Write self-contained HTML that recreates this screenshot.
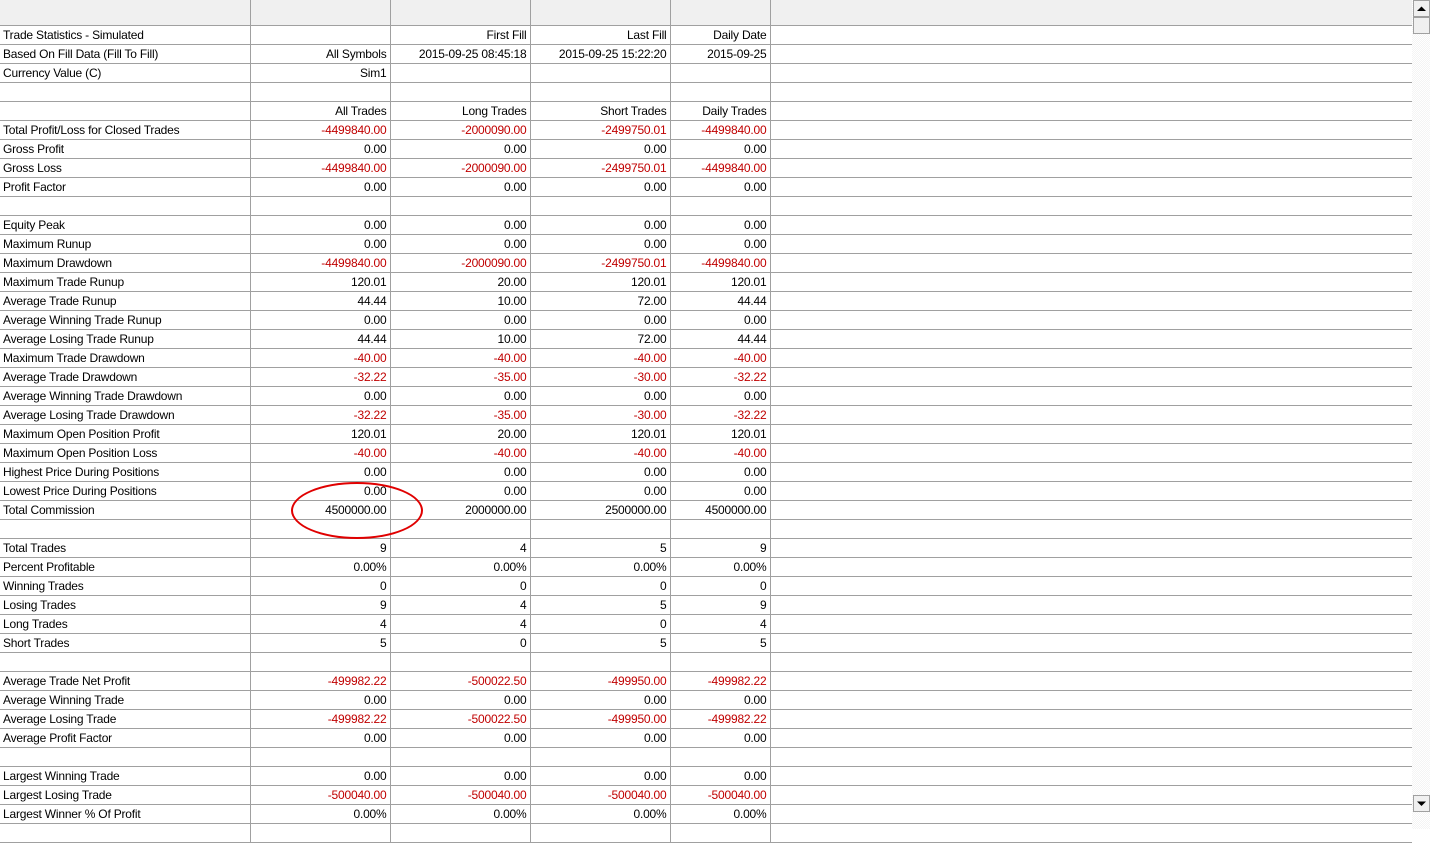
<!DOCTYPE html>
<html><head><meta charset="utf-8"><style>
html,body{margin:0;padding:0;background:#fff;width:1430px;height:829px;overflow:hidden;font-family:"Liberation Sans",Tahoma,sans-serif;font-size:12px;color:#000}
#g{position:absolute;left:0;top:0;width:1412px}
table{border-collapse:collapse;table-layout:fixed;width:1412px}
td{height:18px;padding:0 3px;border-right:1px solid #a0a0a0;border-bottom:1px solid #a0a0a0;white-space:nowrap;overflow:hidden;text-align:right;line-height:18px;letter-spacing:-0.2px}
td:first-child{text-align:left}
tr.h td{height:25px;background:#f0f0f0;border-bottom:1px solid #a0a0a0}
td:last-child{border-right:none}
.r{color:#c00000}
#sb{position:absolute;left:1412px;top:0;width:18px;height:829px;background:repeating-conic-gradient(#f4f4f4 0 25%,#fff 0 50%) 0 0/2px 2px}
.btn{position:absolute;left:1px;width:17px;height:17px;background:#f0f0f0;border:1px solid #a0a0a0;box-sizing:border-box}
#el{position:absolute;left:291px;top:482px;width:132px;height:57px;border:2px solid #e00000;border-radius:50%;box-sizing:border-box}
</style></head><body>
<div id="g"><table>
<colgroup><col style="width:250px"><col style="width:140px"><col style="width:140px"><col style="width:140px"><col style="width:100px"><col></colgroup>
<tr class="h"><td></td><td></td><td></td><td></td><td></td><td></td></tr>
<tr><td>Trade Statistics - Simulated</td><td></td><td>First Fill</td><td>Last Fill</td><td>Daily Date</td><td></td></tr>
<tr><td>Based On Fill Data (Fill To Fill)</td><td>All Symbols</td><td>2015-09-25 08:45:18</td><td>2015-09-25 15:22:20</td><td>2015-09-25</td><td></td></tr>
<tr><td>Currency Value (C)</td><td>Sim1</td><td></td><td></td><td></td><td></td></tr>
<tr><td></td><td></td><td></td><td></td><td></td><td></td></tr>
<tr><td></td><td>All Trades</td><td>Long Trades</td><td>Short Trades</td><td>Daily Trades</td><td></td></tr>
<tr><td>Total Profit/Loss for Closed Trades</td><td class="r">-4499840.00</td><td class="r">-2000090.00</td><td class="r">-2499750.01</td><td class="r">-4499840.00</td><td></td></tr>
<tr><td>Gross Profit</td><td>0.00</td><td>0.00</td><td>0.00</td><td>0.00</td><td></td></tr>
<tr><td>Gross Loss</td><td class="r">-4499840.00</td><td class="r">-2000090.00</td><td class="r">-2499750.01</td><td class="r">-4499840.00</td><td></td></tr>
<tr><td>Profit Factor</td><td>0.00</td><td>0.00</td><td>0.00</td><td>0.00</td><td></td></tr>
<tr><td></td><td></td><td></td><td></td><td></td><td></td></tr>
<tr><td>Equity Peak</td><td>0.00</td><td>0.00</td><td>0.00</td><td>0.00</td><td></td></tr>
<tr><td>Maximum Runup</td><td>0.00</td><td>0.00</td><td>0.00</td><td>0.00</td><td></td></tr>
<tr><td>Maximum Drawdown</td><td class="r">-4499840.00</td><td class="r">-2000090.00</td><td class="r">-2499750.01</td><td class="r">-4499840.00</td><td></td></tr>
<tr><td>Maximum Trade Runup</td><td>120.01</td><td>20.00</td><td>120.01</td><td>120.01</td><td></td></tr>
<tr><td>Average Trade Runup</td><td>44.44</td><td>10.00</td><td>72.00</td><td>44.44</td><td></td></tr>
<tr><td>Average Winning Trade Runup</td><td>0.00</td><td>0.00</td><td>0.00</td><td>0.00</td><td></td></tr>
<tr><td>Average Losing Trade Runup</td><td>44.44</td><td>10.00</td><td>72.00</td><td>44.44</td><td></td></tr>
<tr><td>Maximum Trade Drawdown</td><td class="r">-40.00</td><td class="r">-40.00</td><td class="r">-40.00</td><td class="r">-40.00</td><td></td></tr>
<tr><td>Average Trade Drawdown</td><td class="r">-32.22</td><td class="r">-35.00</td><td class="r">-30.00</td><td class="r">-32.22</td><td></td></tr>
<tr><td>Average Winning Trade Drawdown</td><td>0.00</td><td>0.00</td><td>0.00</td><td>0.00</td><td></td></tr>
<tr><td>Average Losing Trade Drawdown</td><td class="r">-32.22</td><td class="r">-35.00</td><td class="r">-30.00</td><td class="r">-32.22</td><td></td></tr>
<tr><td>Maximum Open Position Profit</td><td>120.01</td><td>20.00</td><td>120.01</td><td>120.01</td><td></td></tr>
<tr><td>Maximum Open Position Loss</td><td class="r">-40.00</td><td class="r">-40.00</td><td class="r">-40.00</td><td class="r">-40.00</td><td></td></tr>
<tr><td>Highest Price During Positions</td><td>0.00</td><td>0.00</td><td>0.00</td><td>0.00</td><td></td></tr>
<tr><td>Lowest Price During Positions</td><td>0.00</td><td>0.00</td><td>0.00</td><td>0.00</td><td></td></tr>
<tr><td>Total Commission</td><td>4500000.00</td><td>2000000.00</td><td>2500000.00</td><td>4500000.00</td><td></td></tr>
<tr><td></td><td></td><td></td><td></td><td></td><td></td></tr>
<tr><td>Total Trades</td><td>9</td><td>4</td><td>5</td><td>9</td><td></td></tr>
<tr><td>Percent Profitable</td><td>0.00%</td><td>0.00%</td><td>0.00%</td><td>0.00%</td><td></td></tr>
<tr><td>Winning Trades</td><td>0</td><td>0</td><td>0</td><td>0</td><td></td></tr>
<tr><td>Losing Trades</td><td>9</td><td>4</td><td>5</td><td>9</td><td></td></tr>
<tr><td>Long Trades</td><td>4</td><td>4</td><td>0</td><td>4</td><td></td></tr>
<tr><td>Short Trades</td><td>5</td><td>0</td><td>5</td><td>5</td><td></td></tr>
<tr><td></td><td></td><td></td><td></td><td></td><td></td></tr>
<tr><td>Average Trade Net Profit</td><td class="r">-499982.22</td><td class="r">-500022.50</td><td class="r">-499950.00</td><td class="r">-499982.22</td><td></td></tr>
<tr><td>Average Winning Trade</td><td>0.00</td><td>0.00</td><td>0.00</td><td>0.00</td><td></td></tr>
<tr><td>Average Losing Trade</td><td class="r">-499982.22</td><td class="r">-500022.50</td><td class="r">-499950.00</td><td class="r">-499982.22</td><td></td></tr>
<tr><td>Average Profit Factor</td><td>0.00</td><td>0.00</td><td>0.00</td><td>0.00</td><td></td></tr>
<tr><td></td><td></td><td></td><td></td><td></td><td></td></tr>
<tr><td>Largest Winning Trade</td><td>0.00</td><td>0.00</td><td>0.00</td><td>0.00</td><td></td></tr>
<tr><td>Largest Losing Trade</td><td class="r">-500040.00</td><td class="r">-500040.00</td><td class="r">-500040.00</td><td class="r">-500040.00</td><td></td></tr>
<tr><td>Largest Winner % Of Profit</td><td>0.00%</td><td>0.00%</td><td>0.00%</td><td>0.00%</td><td></td></tr>
<tr><td></td><td></td><td></td><td></td><td></td><td></td></tr>
</table></div>
<div id="el"></div>
<div id="sb">
<div class="btn" style="top:0"><svg width="15" height="15" style="position:absolute;left:0;top:0"><path d="M3 10 L12 10 L7.5 5.5 Z" fill="#000"/></svg></div>
<div class="btn" style="top:17px;background:#f0f0f0"></div>
<div class="btn" style="top:795px"><svg width="15" height="15" style="position:absolute;left:0;top:0"><path d="M3 5.5 L12 5.5 L7.5 10 Z" fill="#000"/></svg></div>
</div>
</body></html>
